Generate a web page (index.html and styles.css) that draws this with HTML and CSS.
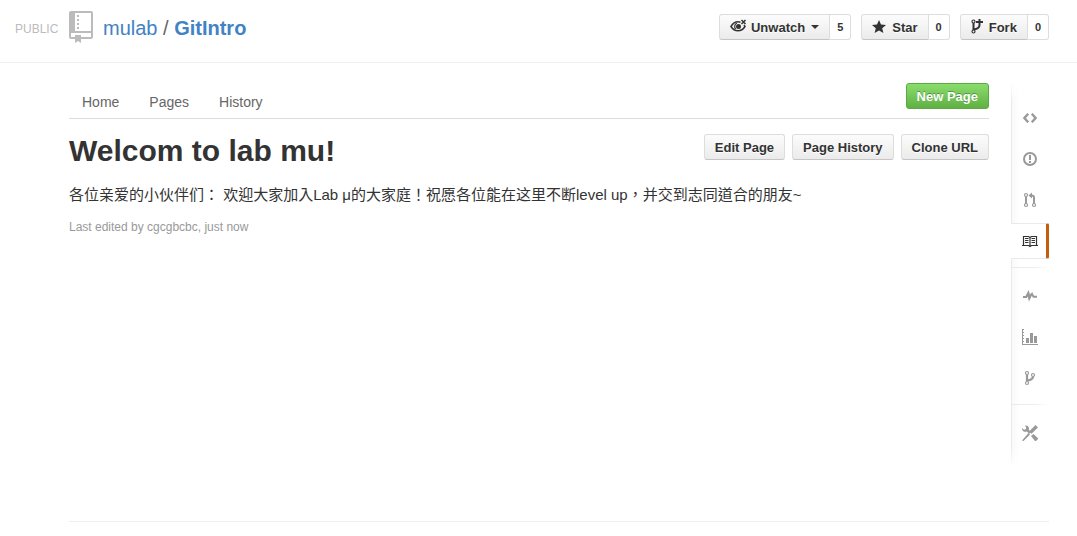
FILE: index.html
```html
<!DOCTYPE html>
<html lang="zh-Hant">
<head>
<meta charset="utf-8">
<title>GitIntro Wiki</title>
<link rel="stylesheet" href="styles.css">
</head>
<body>
<header class="repohead">
  <span class="visibility">PUBLIC</span>
  <svg class="repo-icon" width="24" height="32" viewBox="0 0 24 32" fill="#bbb" aria-hidden="true"><path fill-rule="evenodd" d="M2 0h20q2 0 2 2v24q0 2-2 2H12v4l-3-2-3 2v-4H2q-2 0-2-2V2Q0 0 2 0zM6 2v18h16V2zM2 22v4h4v-2h6v2h10v-4z"/><path d="M8 4h2v2H8zM8 8h2v2H8zM8 12h2v2H8zM8 16h2v2H8z"/></svg>
  <h1 class="repo-title"><a href="#owner">mulab</a> / <a class="repo-name" href="#repo">GitIntro</a></h1>
  <div class="actions">
    <div class="action">
      <button class="btn btn-count" type="button"><svg width="17" height="16" viewBox="0 0 17 16" fill="none" stroke="#333" aria-hidden="true"><path stroke-width="1.5" d="M10.500 3.200C6 1.800 3 4.200 1 7.500c3.500 5.700 10.500 5.700 14 0l-1-1.500"/><path stroke-width="1.200" d="M7 4.200C4.500 5 4 8 5.600 10"/><circle cx="8.500" cy="7.500" r="2.500" fill="#333" stroke="none"/><path stroke-width="1.500" d="M11.500 1l4 4M15.500 1l-4 4"/></svg>Unwatch<span class="caret"></span></button><a class="count" href="#watchers">5</a>
    </div>
    <div class="action">
      <button class="btn btn-count" type="button"><svg width="14" height="16" viewBox="0 0 14 16" fill="#333" aria-hidden="true"><path d="M7 1l2 4.600 5 .4-3.800 3.300L11.400 14 7 11.400 2.600 14l1.200-4.700L0 6l5-.4z"/></svg><span class="btn-label">Star</span></button><a class="count" href="#stars">0</a>
    </div>
    <div class="action">
      <button class="btn btn-count" type="button"><svg width="12" height="16" viewBox="0 0 12 16" fill="none" stroke="#333" aria-hidden="true"><circle cx="2.500" cy="2.500" r="1.500" stroke-width="1.200"/><circle cx="2.500" cy="12.500" r="1.500" stroke-width="1.200"/><path stroke-width="2" d="M2.500 4v7M3 10.500C6 10 8.500 9 8.500 6M5 3h7M8.500 0v6"/></svg><span class="btn-label">Fork</span></button><a class="count" href="#forks">0</a>
    </div>
  </div>
</header>
<div class="container">
  <main class="wiki">
    <nav class="tabs">
      <a href="#home">Home</a><a href="#pages">Pages</a><a href="#history">History</a>
      <button class="btn btn-primary" type="button">New Page</button>
    </nav>
    <div class="page-head">
      <h2 class="page-title">Welcom to lab mu!</h2>
      <button class="btn" type="button">Edit Page</button>
      <button class="btn" type="button">Page History</button>
      <button class="btn" type="button">Clone URL</button>
    </div>
    <p class="page-text">各位亲爱的小伙伴们： 欢迎大家加入Lab μ的大家庭！祝愿各位能在这里不断level up，并交到志同道合的朋友~</p>
    <p class="edited">Last edited by cgcgbcbc, just now</p>
  </main>
  <nav class="sidebar" aria-label="Repository">
    <ul class="menu">
      <li><a href="#code" aria-label="Code"><svg width="16" height="16" viewBox="0 0 16 16" fill="none" stroke="#999" stroke-width="2.400"><path d="M6.200 3.800L2.400 8l3.800 4.200M9.800 3.800L13.600 8l-3.800 4.200"/></svg></a></li>
      <li><a href="#issues" aria-label="Issues"><svg width="16" height="16" viewBox="0 0 16 16" fill="none" stroke="#999" stroke-width="2"><circle cx="8" cy="8" r="6"/><path d="M8 4v5M8 10v2"/></svg></a></li>
      <li><a href="#pulls" aria-label="Pull requests"><svg width="16" height="16" viewBox="0 0 16 16" fill="none" stroke="#999" stroke-width="1.200"><circle cx="4" cy="3" r="1.500"/><circle cx="4" cy="13" r="1.500"/><circle cx="12" cy="13" r="1.500"/><path stroke-width="2" d="M4 4.500v7M12 11.500V5.500Q12 3.500 9.500 3.500"/><path fill="#999" stroke="none" d="M10 .5v6L6.500 3.500z"/></svg></a></li>
      <li><a class="selected" href="#wiki" aria-label="Wiki" aria-current="page"><svg width="16" height="16" viewBox="0 0 16 16" fill="none" stroke="#333"><path stroke-width="1.200" d="M1.500 3.500h5L8 4.500l1.500-1h5v9h-5l-1.500 1-1.500-1h-5zM0 12.500h7M9 12.500h7M8 4v9M3 5.500h3.500M3 7.500h3.500M3 9.500h3.500M9.500 5.500H13M9.500 7.500H13M9.500 9.500H13"/></svg></a></li>
    </ul>
    <ul class="menu">
      <li><a href="#pulse" aria-label="Pulse"><svg width="16" height="16" viewBox="0 0 16 16" fill="#999"><path d="M1 8h2.500L6.600 2l1.400 4.500L10.200 4 12 7.800h3v2h-4l-1.200-2L7 13.500 5.700 8.500 4.800 10H1z"/></svg></a></li>
      <li><a href="#graphs" aria-label="Graphs"><svg width="16" height="16" viewBox="0 0 16 16" fill="#999"><path d="M0 0h1v15h15v1H0zM1 0h1v1H1zM1 3h1v1H1zM1 6h1v1H1zM1 9h1v1H1zM1 12h1v1H1zM4 9h3v5H4zM8 4h3v10H8zM12 7h3v7h-3z"/></svg></a></li>
      <li><a href="#network" aria-label="Network"><svg width="16" height="16" viewBox="0 0 16 16" fill="none" stroke="#999" stroke-width="1.200"><circle cx="5" cy="3" r="1.500"/><circle cx="5" cy="13" r="1.500"/><circle cx="11" cy="5" r="1.500"/><path stroke-width="2.200" d="M5 4.500v7M11 6.500C11 9 9 10 5.500 10.500"/></svg></a></li>
    </ul>
    <ul class="menu">
      <li><a href="#settings" aria-label="Settings"><svg width="16" height="16" viewBox="0 0 16 16" fill="#999"><path d="M13.500 0L16 2.500 9.500 8.800 7 6.500zM6.500 8L8 9.500 1.500 16 0 15.500zM9 11l2.500-2L16 13.200V14l-2 2h-1zM0 3l2 1.800 1.800-.6L4.200 2.500 3 .6C5.500 0 7.600 2 6.800 4.800L9 7 7.200 8.800 4.800 6.600C2 7.500-.2 5.500 0 3z"/></svg></a></li>
    </ul>
  </nav>
</div>
</body>
</html>
```
FILE: styles.css
```css
* {
  box-sizing: border-box;
}

body {
  margin: 0;
  background: #fff;
  color: #333;
  font-family: "Liberation Sans", Arial, "Noto Sans CJK TC", sans-serif;
  font-size: 13px;
}

a {
  color: #4183c4;
  text-decoration: none;
}

h1,
h2,
p,
ul {
  margin: 0;
  padding: 0;
}

.repohead {
  display: flex;
  align-items: flex-start;
  padding: 11px 28px 15px 15px;
  border-bottom: 1px solid #eee;
}

.visibility {
  width: 54px;
  color: #bbb;
  font-size: 12px;
  line-height: 36px;
}

.repo-title {
  margin-left: 10px;
  color: #666;
  font-size: 20px;
  font-weight: normal;
  line-height: 34px;
}

.repo-name {
  font-weight: bold;
}

.actions {
  display: flex;
  gap: 10px;
  margin-left: auto;
  padding-top: 3px;
}

.action {
  display: flex;
}

.btn {
  display: flex;
  align-items: center;
  gap: 4px;
  height: 26px;
  padding: 0 10px;
  border: 1px solid #ddd;
  border-bottom-color: #c5c5c5;
  border-radius: 3px;
  background: linear-gradient(#fcfcfc, #ebebeb);
  color: #333;
  font: bold 13px "Liberation Sans", Arial, sans-serif;
  text-shadow: 0 1px 0 rgba(255, 255, 255, 0.9);
  white-space: nowrap;
}

.btn-count {
  border-radius: 3px 0 0 3px;
}

.btn-label {
  padding-left: 2px;
}

.caret {
  margin-left: 2px;
  border: 4px solid transparent;
  border-top-color: #333;
  border-bottom-width: 0;
}

.count {
  padding: 0 7px;
  border: 1px solid #ddd;
  border-left: 0;
  border-radius: 0 3px 3px 0;
  color: #333;
  font-size: 11px;
  font-weight: bold;
  line-height: 24px;
}

.btn-primary {
  margin-left: auto;
  border-color: #5ca941;
  background: linear-gradient(#8add6d, #60b044);
  color: #fff;
  text-shadow: 0 -1px 0 rgba(0, 0, 0, 0.3);
}

.container {
  display: flex;
  gap: 22px;
  margin: 0 28px 0 69px;
  padding: 20px 0 54px;
  border-bottom: 1px solid #eee;
}

.wiki {
  flex: 1;
  min-width: 0;
}

.tabs {
  display: flex;
  gap: 30px;
  height: 36px;
  padding-left: 13px;
  border-bottom: 1px solid #ddd;
}

.tabs a {
  color: #666;
  font-size: 14px;
  line-height: 38px;
}

.page-head {
  display: flex;
  gap: 7px;
  padding-top: 15px;
}

.page-title {
  margin-right: auto;
  font-size: 30px;
  line-height: 33px;
}

.page-text {
  margin-top: 15px;
  font-size: 15px;
  line-height: 25px;
}

.edited {
  margin-top: 13px;
  color: #999;
  font-size: 12px;
  line-height: 15px;
}

.sidebar {
  width: 38px;
  padding: 17px 0 16px;
  background:
    linear-gradient(#fff, transparent 20px, transparent calc(100% - 20px), #fff),
    linear-gradient(to right, #eaeaea 1px, #f9f9f9 1px, #fff 9px);
}

.menu {
  display: grid;
  gap: 5px;
  list-style: none;
}

.menu + .menu {
  margin-top: 8px;
  padding-top: 11px;
  background: linear-gradient(to right, #eaeaea, #eee 60%, #fff) top / 100% 1px no-repeat;
}

.menu a {
  display: flex;
  align-items: center;
  height: 36px;
  padding-left: 11px;
}

.menu .selected {
  border-top: 1px solid #eaeaea;
  border-right: 3px solid #c45e0f;
  border-bottom: 1px solid #eaeaea;
  border-radius: 0 2px 2px 0;
  background: #fff;
}
```
